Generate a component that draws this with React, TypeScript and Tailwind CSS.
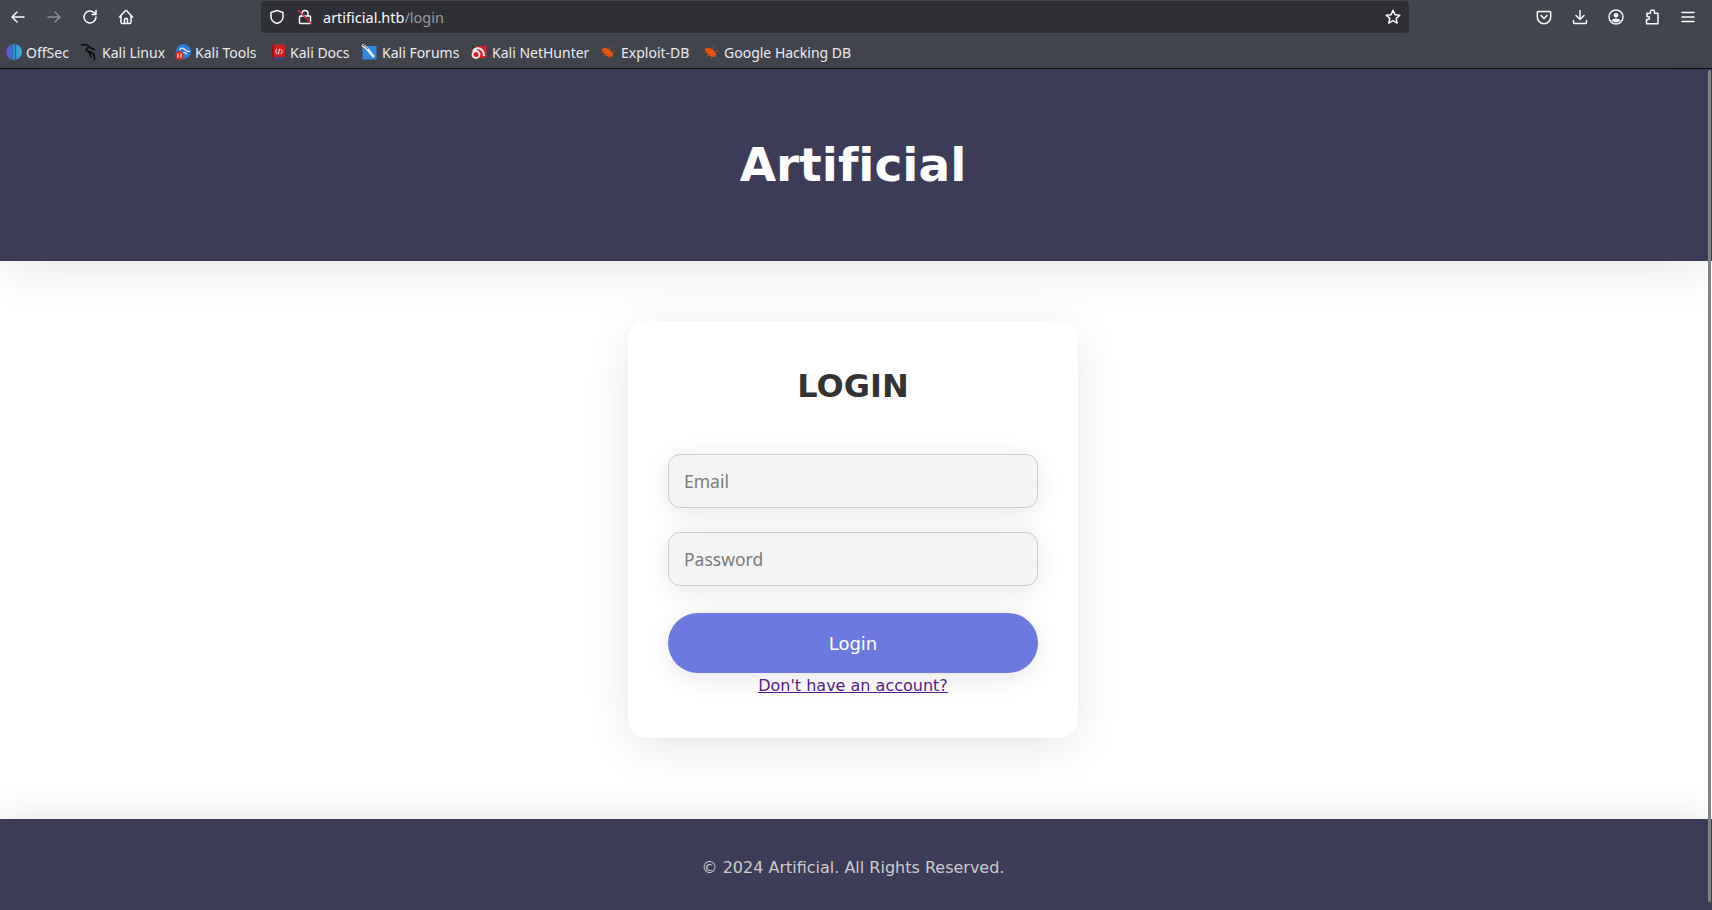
import { ReactNode } from 'react';

const stroke = { fill: 'none', stroke: 'currentColor', strokeWidth: 1.5, strokeLinecap: 'round', strokeLinejoin: 'round' } as const;

function Glyph({ children, className = 'text-[#fbfbfe]' }: { children: ReactNode; className?: string }) {
  return (
    <svg viewBox="0 0 16 16" className={`w-4 h-4 shrink-0 ${className}`} {...stroke}>
      {children}
    </svg>
  );
}

function ToolButton({ children }: { children: ReactNode }) {
  return <div className="w-[36px] h-[34px] flex items-center justify-center shrink-0">{children}</div>;
}

const OffSecIcon = () => (
  <svg viewBox="0 0 16 16" className="w-4 h-4 -mr-[1px]">
    <defs>
      <linearGradient id="offsec" x1="0" y1="0" x2="1" y2="0">
        <stop offset="0" stopColor="#6a4ad0" />
        <stop offset="0.5" stopColor="#2f8fd8" />
        <stop offset="1" stopColor="#38b6d8" />
      </linearGradient>
    </defs>
    <circle cx="8" cy="8" r="8" fill="url(#offsec)" />
    <path d="M6 0v16M9.500 0v16" stroke="#42454d" strokeWidth="0.700" />
  </svg>
);

const KaliLinuxIcon = () => (
  <svg viewBox="0 0 16 16" className="w-4 h-4" fill="none" stroke="#060607" strokeWidth="1.500" strokeLinecap="round">
    <path d="M0.500 1c3-1 6 0 8 2 1.500 1.500 3 2 5 2.500M7 4c-2 .5-2.500 2-1 3 2 1 5 1 6.500 3 1 1.500 1 3.500 1 5.500M8 8.500c1.500 1.500 2 3 2 4.500" />
  </svg>
);

const KaliToolsIcon = () => (
  <svg viewBox="0 0 16 16" className="w-4 h-4 -mr-[1px]">
    <circle cx="8.500" cy="7.500" r="7.500" fill="#2e7de0" />
    <path d="M4 6c2-2.500 5-2.500 6 0 1 1 3 1.500 5 1.500M7 9.500c1-1 3-1 5 .5" fill="none" stroke="#e6f0fb" strokeWidth="1.100" />
    <circle cx="4.500" cy="11.500" r="4.500" fill="#dc2b2b" />
    <path d="M3 9.500v4M6 9.500v4" stroke="#fff" strokeWidth="1.100" />
  </svg>
);

const KaliDocsIcon = () => (
  <svg viewBox="0 0 16 16" className="w-[15px] h-4 -mr-[1px]">
    <rect x="1" y="0" width="14" height="15" fill="#d21f1f" />
    <rect x="1" y="13.500" width="14" height="2.500" fill="#39458c" />
    <rect x="1" y="0" width="2" height="16" fill="#8c1c24" />
    <path d="M6.500 5 4.800 7.500l1.700 2.500M10.500 5l1.700 2.500-1.700 2.500M9.200 4.500 7.800 10.500" fill="none" stroke="#fff" strokeWidth="1" />
  </svg>
);

const KaliForumsIcon = () => (
  <svg viewBox="0 0 16 16" className="w-4 h-4">
    <rect x="1.500" y="2" width="14" height="13.500" fill="#2f8be8" />
    <path d="M1 1c3 1 5 3 7 6 1.500 2 3 4 5 6" fill="none" stroke="#f2f2f2" strokeWidth="2.800" />
    <path d="M1.500 1c2 .5 4 2 5 4" fill="none" stroke="#1c1c1c" strokeWidth="0.800" />
  </svg>
);

const NetHunterIcon = () => (
  <svg viewBox="0 0 16 16" className="w-4 h-4">
    <path d="M5 2.500 15.500 1.500V14H1V7Z" fill="#d8232f" />
    <path d="M2 7c2-3 6-4 9-1 1.500 1.500 2 4 2 6" fill="none" stroke="#f4f4f4" strokeWidth="2" />
    <circle cx="5" cy="10.500" r="3.500" fill="none" stroke="#f4f4f4" strokeWidth="1.800" />
    <path d="M0.500 1 3 4" stroke="#222" strokeWidth="1" />
  </svg>
);

const BugIcon = () => (
  <svg viewBox="0 0 16 16" className="w-4 h-4">
    <path d="M1.500 5c4-2.500 8-.5 11 3.500 1.500 2 .5 4.500-1.500 4.500-4 0-8-3-9.500-8Z" fill="#e8590f" />
    <path d="M.5 8 5 9M3 12.500l4-2.500M8 15l1.500-3.500M11.500 2 9 5.500M15.500 7l-4 1" stroke="#a94a18" strokeWidth="1" fill="none" />
  </svg>
);

const bookmarks = [
  { label: 'OffSec', icon: <OffSecIcon />, width: 'w-[75px]' },
  { label: 'Kali Linux', icon: <KaliLinuxIcon />, width: 'w-[94px]' },
  { label: 'Kali Tools', icon: <KaliToolsIcon />, width: 'w-[96px]' },
  { label: 'Kali Docs', icon: <KaliDocsIcon />, width: 'w-[90px]' },
  { label: 'Kali Forums', icon: <KaliForumsIcon />, width: 'w-[110px]' },
  { label: 'Kali NetHunter', icon: <NetHunterIcon />, width: 'w-[129px]' },
  { label: 'Exploit-DB', icon: <BugIcon />, width: 'w-[103px]' },
  { label: 'Google Hacking DB', icon: <BugIcon />, width: 'w-[150px]' },
];

const inputClass =
  "w-full h-[54px] px-[15px] rounded-[12px] border border-[#cccccc] bg-[#f4f4f4] text-[17.5px] font-['Noto_Sans',sans-serif] placeholder:text-[#7a7a7a] shadow-[0_5px_30px_rgba(0,0,0,0.1)] outline-none";

function BrowserChrome() {
  return (
    <div className="h-[69px] shrink-0 bg-[#42454d] border-b border-[#0c0c0d] font-['Noto_Sans',sans-serif]">
      <div className="h-[34px] flex items-center pr-[6px]">
        <ToolButton>
          <Glyph>
            <path d="M14 8H2M7 3 2 8l5 5" />
          </Glyph>
        </ToolButton>
        <ToolButton>
          <Glyph className="text-[#8b8d92]">
            <path d="M2 8h12M9 3l5 5-5 5" />
          </Glyph>
        </ToolButton>
        <ToolButton>
          <Glyph>
            <path d="M14 8a6 6 0 1 1-1.800-4.300L14 5.500M14 1.500v4H10" />
          </Glyph>
        </ToolButton>
        <ToolButton>
          <Glyph>
            <path d="M1.500 8 7.300 1.800a1 1 0 0 1 1.400 0L14.500 8M3 6.800v6.700a1 1 0 0 0 1 1h8a1 1 0 0 0 1-1V6.800M6.500 14.500V10.500a1 1 0 0 1 1-1h1a1 1 0 0 1 1 1v4" />
          </Glyph>
        </ToolButton>
        <div className="ml-[117px] w-[1148px] h-[32px] rounded-[4px] bg-[#2f3035] flex items-center pl-[8px] pr-[6px] text-[14.5px]">
          <Glyph>
            <path d="M8 1.500 2 3.500v4c0 3.500 2.500 6 6 7 3.500-1 6-3.500 6-7v-4Z" />
          </Glyph>
          <svg viewBox="0 0 16 16" className="w-4 h-4 ml-[12px] text-[#fbfbfe]" {...stroke}>
            <rect x="2.500" y="7" width="11" height="7.500" rx="1" />
            <path d="M5 7V4.500a3 3 0 0 1 6 0V7" />
            <path d="M1.500 1.500l13 13" stroke="#e22850" />
          </svg>
          <span className="ml-[10px] pt-[2px] text-[#fbfbfe]">
            artificial.htb<span className="text-[#9a9a9f]">/login</span>
          </span>
          <svg viewBox="0 0 16 16" className="w-4 h-4 ml-auto mr-[2px] text-[#fbfbfe]" {...stroke}>
            <path d="M8 1.300 10 5.700l4.800.5-3.600 3.200 1 4.700L8 11.700l-4.200 2.400 1-4.700L1.200 6.200 6 5.700Z" />
          </svg>
        </div>
        <div className="ml-auto flex items-center">
          <ToolButton>
            <Glyph>
              <path d="M2.300 2.500h11.400a1 1 0 0 1 1 1V8a6.700 6.700 0 0 1-13.400 0V3.500a1 1 0 0 1 1-1ZM5 6.500l3 3 3-3" />
            </Glyph>
          </ToolButton>
          <ToolButton>
            <Glyph>
              <path d="M8 1.500V10.500M4 6.500l4 4 4-4M1.500 11.500v2a1 1 0 0 0 1 1h11a1 1 0 0 0 1-1v-2" />
            </Glyph>
          </ToolButton>
          <ToolButton>
            <svg viewBox="0 0 16 16" className="w-4 h-4 text-[#fbfbfe]">
              <circle cx="8" cy="8" r="7" fill="none" stroke="currentColor" strokeWidth="1.400" />
              <circle cx="8" cy="6.200" r="2.300" fill="currentColor" />
              <path d="M3.500 11.500c1-1.300 2.500-2 4.500-2s3.500.7 4.500 2c-1 1.200-2.700 2-4.500 2s-3.500-.8-4.500-2Z" fill="currentColor" />
            </svg>
          </ToolButton>
          <ToolButton>
            <Glyph>
              <path d="M2.500 14.800V10.500H4a1.500 1.500 0 0 0 0-3H3V4.300h3.500V3a2 2 0 0 1 4 0v1.300h2.800a.7.7 0 0 1 .7.700v9.100a.7.7 0 0 1-.7.700Z" />
            </Glyph>
          </ToolButton>
          <ToolButton>
            <Glyph>
              <path d="M2 3.500h12M2 8h12M2 12.500h12" />
            </Glyph>
          </ToolButton>
        </div>
      </div>
      <div className="h-[34px] pt-[2px] flex items-center pl-[6px] text-[14px] text-[#f0f0f4]">
        {bookmarks.map((b) => (
          <div key={b.label} className={`flex items-center gap-[5px] shrink-0 ${b.width}`}>
            {b.icon}
            <span className="whitespace-nowrap">{b.label}</span>
          </div>
        ))}
      </div>
    </div>
  );
}

export default function App() {
  return (
    <div className="relative h-[910px] overflow-hidden flex flex-col bg-white font-['DejaVu_Sans',sans-serif]">
      <BrowserChrome />

      <header className="relative z-10 h-[192px] shrink-0 bg-[#3c3b58] pr-[6px] pb-[2px] flex items-center justify-center shadow-[0_10px_50px_rgba(0,0,0,0.1)]">
        <h1 className="text-[47px] font-bold text-white leading-none [font-variant-ligatures:none]">Artificial</h1>
      </header>

      <main className="flex-1 pr-[6px] pt-[60px] flex justify-center items-start">
        <div className="w-[450px] h-[417px] rounded-[20px] bg-white px-[40px] pt-[46px] shadow-[0_10px_50px_rgba(0,0,0,0.1)] flex flex-col items-center">
          <h2 className="text-[32px] leading-[38px] font-bold text-[#333333]">LOGIN</h2>
          <form className="w-full mt-[49px] flex flex-col">
            <input placeholder="Email" className={inputClass} />
            <div className="h-[24px]" />
            <input type="password" placeholder="Password" className={inputClass} />
            <button
              type="button"
              className="w-full h-[60px] mt-[27px] rounded-full bg-[#6c7ae0] text-white text-[18px] shadow-[0_5px_30px_rgba(0,0,0,0.1)]"
            >
              Login
            </button>
            <a href="#" className="mt-[3px] text-center text-[16px] leading-[19px] text-[#551a8b] underline">
              Don't have an account?
            </a>
          </form>
        </div>
      </main>

      <footer className="relative z-10 h-[91px] shrink-0 bg-[#3c3b58] pr-[6px] pt-[6px] flex items-center justify-center shadow-[0_-5px_40px_rgba(0,0,0,0.1)]">
        <p className="text-[16px] text-[#cccccc]">© 2024 Artificial. All Rights Reserved.</p>
      </footer>

      {/* overlay scrollbar */}
      <div className="absolute z-20 right-[1px] top-[70px] w-[3px] h-[832px] rounded-full bg-[#7f8283]" />
    </div>
  );
}
